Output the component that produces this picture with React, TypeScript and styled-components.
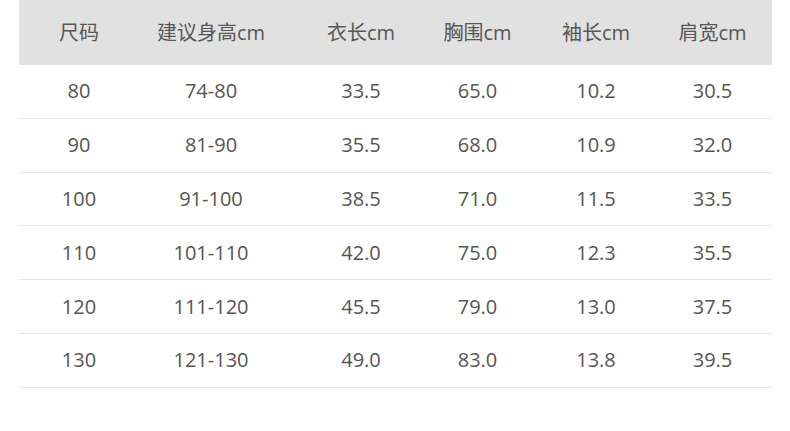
import React from "react";
import styled, { createGlobalStyle } from "styled-components";

const GlobalStyle = createGlobalStyle`
  html, body {
    margin: 0;
    padding: 0;
    background: #ffffff;
  }
  body {
    font-family: "Open Sans", "Noto Sans CJK SC", sans-serif;
    color: #555555;
  }
`;

const Page = styled.div`
  width: 790px;
  height: 431px;
  padding-left: 19px;
  box-sizing: border-box;
`;

const Table = styled.div`
  width: 753px;
  display: flex;
  flex-direction: column;
`;

const COLS = "120px 144px 156px 77px 160px 73px 23px";

const HeaderRow = styled.div`
  display: grid;
  grid-template-columns: ${COLS};
  height: 65px;
  align-items: center;
  background: #e1e1e1;
`;

const Row = styled.div`
  display: grid;
  grid-template-columns: ${COLS};
  height: 52.8px;
  align-items: center;
  border-bottom: 1px solid #e6e6e6;
`;

const Cell = styled.div<{ $head?: boolean }>`
  text-align: center;
  white-space: nowrap;
  font-size: 20px;
  line-height: 1;
  color: ${(p) => (p.$head ? "#575757" : "#555555")};
  font-family: "Open Sans", "Noto Sans CJK SC", sans-serif;
`;

const headers = ["尺码", "建议身高cm", "衣长cm", "胸围cm", "袖长cm", "肩宽cm"];

const rows = [
  ["80", "74-80", "33.5", "65.0", "10.2", "30.5"],
  ["90", "81-90", "35.5", "68.0", "10.9", "32.0"],
  ["100", "91-100", "38.5", "71.0", "11.5", "33.5"],
  ["110", "101-110", "42.0", "75.0", "12.3", "35.5"],
  ["120", "111-120", "45.5", "79.0", "13.0", "37.5"],
  ["130", "121-130", "49.0", "83.0", "13.8", "39.5"],
];

export default function App() {
  return (
    <>
      <GlobalStyle />
      <Page>
        <Table>
          <HeaderRow>
            {headers.map((h) => (
              <Cell $head key={h}>
                {h}
              </Cell>
            ))}
            <span />
          </HeaderRow>
          {rows.map((r) => (
            <Row key={r[0]}>
              {r.map((v, i) => (
                <Cell key={i}>{v}</Cell>
              ))}
              <span />
            </Row>
          ))}
        </Table>
      </Page>
    </>
  );
}
